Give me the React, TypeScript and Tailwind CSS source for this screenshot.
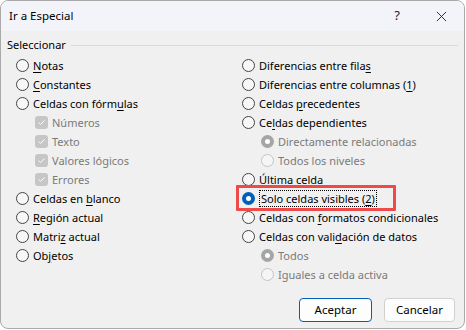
import type { ReactNode } from "react";

type Opt = {
  label: ReactNode;
  kind?: "radio" | "check";
  indent?: boolean;
  disabled?: boolean;
  checked?: boolean;
  highlight?: boolean;
};

function U({ children }: { children: ReactNode }) {
  return <span className="underline underline-offset-2">{children}</span>;
}

function Radio({ checked, disabled }: { checked?: boolean; disabled?: boolean }) {
  if (checked) {
    return (
      <span
        className={`flex h-[13px] w-[13px] shrink-0 items-center justify-center rounded-full ${
          disabled ? "bg-[#a5a5a5]" : "bg-[#005fb8]"
        }`}
      >
        <span className="h-[5px] w-[5px] rounded-full bg-white" />
      </span>
    );
  }
  return (
    <span
      className={`h-[13px] w-[13px] shrink-0 rounded-full border ${
        disabled ? "border-[#c4c4c4] bg-[#f5f5f5]" : "border-[#444] bg-[#f7f7f7]"
      }`}
    />
  );
}

function Check() {
  return (
    <span className="flex h-[13px] w-[13px] shrink-0 items-center justify-center rounded-[3px] bg-[#c6c6c6]">
      <svg viewBox="0 0 12 12" className="h-[9px] w-[9px]" fill="none" stroke="white" strokeWidth="1.3">
        <path d="M2.5 6.3l2.3 2.3 4.8-5" strokeLinecap="round" strokeLinejoin="round" />
      </svg>
    </span>
  );
}

function Row({ o }: { o: Opt }) {
  return (
    <div className={`relative flex h-[19px] items-center ${o.indent ? "pl-[19px]" : ""}`}>
      {o.kind === "check" ? <Check /> : <Radio checked={o.checked} disabled={o.disabled} />}
      <span
        className={`ml-[4px] whitespace-nowrap leading-[15px] ${o.disabled ? "text-[#7a7a7a]" : "text-black"} ${
          o.highlight ? "border border-dotted border-black px-[1px]" : ""
        }`}
      >
        {o.label}
      </span>
      {o.highlight && (
        <span className="pointer-events-none absolute left-[-6px] top-[-4px] h-[26px] w-[160px] border-[3px] border-[#ef4a4a] rounded-[1px]" />
      )}
    </div>
  );
}

const left: Opt[] = [
  { label: <><U>N</U>otas</> },
  { label: <><U>C</U>onstantes</> },
  { label: <>Celdas con fórm<U>u</U>las</> },
  { label: "Números", kind: "check", indent: true, disabled: true },
  { label: "Texto", kind: "check", indent: true, disabled: true },
  { label: "Valores lógicos", kind: "check", indent: true, disabled: true },
  { label: "Errores", kind: "check", indent: true, disabled: true },
  { label: <>Celdas en <U>b</U>lanco</> },
  { label: <><U>R</U>egión actual</> },
  { label: <>Matri<U>z</U> actual</> },
  { label: <>Ob<U>j</U>etos</> },
];

const right: Opt[] = [
  { label: <>Diferencias entre fila<U>s</U></> },
  { label: <>Diferencias entre columnas (<U>1</U>)</> },
  { label: <>Celdas <U>p</U>recedentes</> },
  { label: <>Ce<U>l</U>das dependientes</> },
  { label: "Directamente relacionadas", indent: true, disabled: true, checked: true },
  { label: "Todos los niveles", indent: true, disabled: true },
  { label: <><U>Ú</U>ltima celda</> },
  { label: <>Solo celdas visibles (<U>2</U>)</>, checked: true, highlight: true },
  { label: <>Celdas con <U>f</U>ormatos condicionales</> },
  { label: <>Celdas con vali<U>d</U>ación de datos</> },
  { label: "Todos", indent: true, disabled: true, checked: true },
  { label: "Iguales a celda activa", indent: true, disabled: true },
];

export default function App() {
  return (
    <div
      className="h-[330px] w-[466px] bg-white text-[11px]"
      style={{ fontFamily: '"Segoe UI", "Noto Sans", "Open Sans", sans-serif' }}
    >
      <div className="flex h-[329px] w-[465px] flex-col overflow-hidden rounded-lg border border-[#aaaaaa] bg-[#f0f0f0]">
        <div className="flex h-[30px] shrink-0 items-center bg-[#f3f4f9] pl-[8px]">
          <span className="text-[11.5px] text-black">Ir a Especial</span>
          <span className="ml-auto mr-[36px] text-[13px] text-[#222]">?</span>
          <svg viewBox="0 0 12 12" className="mr-[17px] h-[11px] w-[11px]" stroke="#222" strokeWidth="1">
            <path d="M1 1l10 10M11 1L1 11" />
          </svg>
        </div>
        <div className="flex flex-1 flex-col px-[6px] pt-[6px]">
          <div className="flex h-[16px] items-center">
            <span className="pr-[5px] text-black">Seleccionar</span>
            <span className="h-px flex-1 bg-[#d9d9d9]" />
          </div>
          <div className="mt-[3px] flex">
            <div className="w-[226px] pl-[9px]">
              {left.map((o, i) => (
                <Row key={i} o={o} />
              ))}
            </div>
            <div className="pl-[9px]">
              {right.map((o, i) => (
                <Row key={i} o={o} />
              ))}
            </div>
          </div>
          <div className="mt-auto mb-[6px] flex justify-end gap-[12px] pr-[3px]">
            <button className="h-[24px] w-[73px] rounded-[4px] border border-[#005fb8] bg-[#fdfdfd] text-[11.5px] text-black">
              Aceptar
            </button>
            <button className="h-[24px] w-[71px] rounded-[4px] border border-[#d0d0d0] bg-[#fdfdfd] text-[11.5px] text-black">
              Cancelar
            </button>
          </div>
        </div>
      </div>
    </div>
  );
}
